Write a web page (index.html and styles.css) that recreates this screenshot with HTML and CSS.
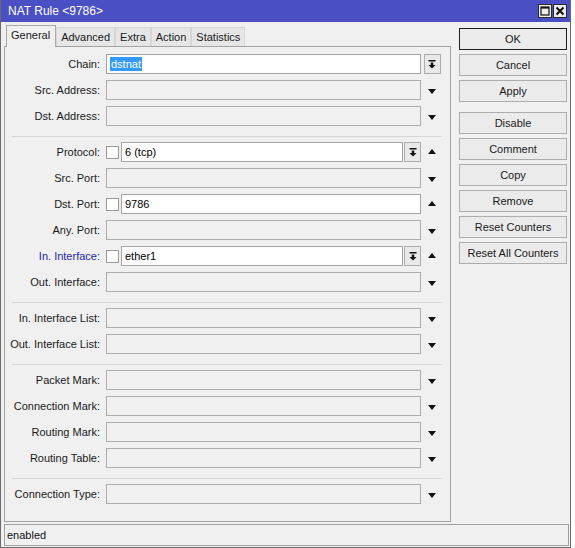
FILE: index.html
```html
<!DOCTYPE html>
<html lang="en">
<head>
  <meta charset="UTF-8" />
  <title>NAT Rule &lt;9786&gt;</title>
  <link rel="stylesheet" href="styles.css">
</head>
<body>
  <div class="window">
    <div class="titlebar">
      <span>NAT Rule &lt;9786&gt;</span>
      <div class="wbtns">
        <div class="wbtn"><svg width="10" height="10" viewBox="0 0 10 10"><rect x="1" y="1" width="8" height="8" fill="none" stroke="#111" stroke-width="1.2"/><rect x="1" y="1" width="8" height="1.6" fill="#111"/></svg></div>
        <div class="wbtn"><svg width="10" height="10" viewBox="0 0 10 10"><path d="M1.5 1.5 L8.5 8.5 M8.5 1.5 L1.5 8.5" stroke="#111" stroke-width="2"/></svg></div>
      </div>
    </div>

    <div class="content">
      <div class="main">
        <div class="tabs">
          <div class="tab active">General</div>
          <div class="tab">Advanced</div>
          <div class="tab">Extra</div>
          <div class="tab">Action</div>
          <div class="tab">Statistics</div>
        </div>

        <div class="panel">
          <div class="row">
            <label>Chain:</label>
            <div class="ctl"><div class="field"><span class="sel">dstnat</span></div></div>
            <div class="trail"><div class="dd"><svg width="8" height="9" viewBox="0 0 8 9"><rect x="0.5" y="0" width="7" height="1.5" fill="#111"/><rect x="2.8" y="2.5" width="2.4" height="2.5" fill="#111"/><path d="M0.5 5 H7.5 L4 8.5 Z" fill="#111"/></svg></div></div>
          </div>
          <div class="row">
            <label>Src. Address:</label>
            <div class="ctl"><div class="field off"></div></div>
            <div class="trail"><span class="down"></span></div>
          </div>
          <div class="row">
            <label>Dst. Address:</label>
            <div class="ctl"><div class="field off"></div></div>
            <div class="trail"><span class="down"></span></div>
          </div>

          <div class="sep"></div>

          <div class="row">
            <label>Protocol:</label>
            <div class="ctl">
              <div class="chk"></div>
              <div class="field">6 (tcp)</div>
              <div class="dd"><svg width="8" height="9" viewBox="0 0 8 9"><rect x="0.5" y="0" width="7" height="1.5" fill="#111"/><rect x="2.8" y="2.5" width="2.4" height="2.5" fill="#111"/><path d="M0.5 5 H7.5 L4 8.5 Z" fill="#111"/></svg></div>
            </div>
            <div class="trail"><span class="up"></span></div>
          </div>
          <div class="row">
            <label>Src. Port:</label>
            <div class="ctl"><div class="field off"></div></div>
            <div class="trail"><span class="down"></span></div>
          </div>
          <div class="row">
            <label>Dst. Port:</label>
            <div class="ctl">
              <div class="chk"></div>
              <div class="field">9786</div>
            </div>
            <div class="trail"><span class="up"></span></div>
          </div>
          <div class="row">
            <label>Any. Port:</label>
            <div class="ctl"><div class="field off"></div></div>
            <div class="trail"><span class="down"></span></div>
          </div>
          <div class="row">
            <label class="blue">In. Interface:</label>
            <div class="ctl">
              <div class="chk"></div>
              <div class="field">ether1</div>
              <div class="dd"><svg width="8" height="9" viewBox="0 0 8 9"><rect x="0.5" y="0" width="7" height="1.5" fill="#111"/><rect x="2.8" y="2.5" width="2.4" height="2.5" fill="#111"/><path d="M0.5 5 H7.5 L4 8.5 Z" fill="#111"/></svg></div>
            </div>
            <div class="trail"><span class="up"></span></div>
          </div>
          <div class="row">
            <label>Out. Interface:</label>
            <div class="ctl"><div class="field off"></div></div>
            <div class="trail"><span class="down"></span></div>
          </div>

          <div class="sep"></div>

          <div class="row">
            <label>In. Interface List:</label>
            <div class="ctl"><div class="field off"></div></div>
            <div class="trail"><span class="down"></span></div>
          </div>
          <div class="row">
            <label>Out. Interface List:</label>
            <div class="ctl"><div class="field off"></div></div>
            <div class="trail"><span class="down"></span></div>
          </div>

          <div class="sep"></div>

          <div class="row">
            <label>Packet Mark:</label>
            <div class="ctl"><div class="field off"></div></div>
            <div class="trail"><span class="down"></span></div>
          </div>
          <div class="row">
            <label>Connection Mark:</label>
            <div class="ctl"><div class="field off"></div></div>
            <div class="trail"><span class="down"></span></div>
          </div>
          <div class="row">
            <label>Routing Mark:</label>
            <div class="ctl"><div class="field off"></div></div>
            <div class="trail"><span class="down"></span></div>
          </div>
          <div class="row">
            <label>Routing Table:</label>
            <div class="ctl"><div class="field off"></div></div>
            <div class="trail"><span class="down"></span></div>
          </div>

          <div class="sep"></div>

          <div class="row">
            <label>Connection Type:</label>
            <div class="ctl"><div class="field off"></div></div>
            <div class="trail"><span class="down"></span></div>
          </div>
        </div>
      </div>

      <div class="side">
        <button class="ok">OK</button>
        <button>Cancel</button>
        <button class="gap-after">Apply</button>
        <button>Disable</button>
        <button>Comment</button>
        <button>Copy</button>
        <button>Remove</button>
        <button>Reset Counters</button>
        <button>Reset All Counters</button>
      </div>
    </div>

    <div class="status">enabled</div>
  </div>
</body>
</html>
```

FILE: styles.css
```css
body {
  margin: 0;
  background: #fff;
  font-family: "Liberation Sans", Arial, sans-serif;
  font-size: 11px;
  color: #1a1a1a;
}

.window {
  width: 569px;
  height: 547px;
  border: 1px solid #6b6b6b;
  border-top: 0;
  background: #f0f0f0;
  display: flex;
  flex-direction: column;
}

.titlebar {
  height: 22px;
  flex-shrink: 0;
  background: #4a4fc4;
  color: #fff;
  font-size: 12px;
  display: flex;
  align-items: center;
  padding: 0 3px 0 7px;
}

.wbtns {
  margin-left: auto;
  display: flex;
  gap: 1px;
}

.wbtn {
  width: 14px;
  height: 14px;
  box-sizing: border-box;
  border: 1px solid #2a2a2a;
  background: #ececec;
  display: flex;
  align-items: center;
  justify-content: center;
}

.content {
  display: flex;
  flex: 1;
}

.main {
  margin-left: 3px;
  width: 447px;
  display: flex;
  flex-direction: column;
}

.tabs {
  height: 24px;
  display: flex;
  align-items: flex-end;
  padding-left: 2px;
  position: relative;
  z-index: 1;
}

.tab {
  height: 19px;
  line-height: 18px;
  padding: 0 4px;
  box-sizing: border-box;
  background: #e6e6e6;
  border: 1px solid #d6d6d6;
  border-bottom: 0;
  color: #1a1a1a;
}

.tab.active {
  height: 22px;
  line-height: 19px;
  margin-bottom: -1px;
  background: #f0f0f0;
  border-color: #a9a9a9;
  padding: 0 5px 0 4px;
}

.panel {
  height: 476px;
  box-sizing: border-box;
  border: 1px solid #a3a3a3;
  padding-top: 7px;
  display: flex;
  flex-direction: column;
}

.row {
  display: flex;
  align-items: center;
  height: 20px;
  margin-bottom: 6px;
  flex-shrink: 0;
}

.row label {
  width: 95px;
  margin-right: 6px;
  text-align: right;
  white-space: nowrap;
}

.row label.blue {
  color: #2626b0;
}

.ctl {
  width: 315px;
  height: 20px;
  display: flex;
  align-items: center;
}

.field {
  flex: 1;
  height: 20px;
  box-sizing: border-box;
  border: 1px solid #a5a5a5;
  background: #fff;
  padding-left: 3px;
  line-height: 18px;
  color: #000;
}

.field.off {
  background: #f0f0f0;
  border-color: #adadad;
}

.sel {
  background: #3399ff;
  color: #fff;
  padding: 1px 1px;
}

.chk {
  width: 13px;
  height: 13px;
  box-sizing: border-box;
  border: 1px solid #9a9a9a;
  background: #fff;
  margin-right: 2px;
}

.dd {
  width: 17px;
  height: 20px;
  box-sizing: border-box;
  border: 1px solid #adadad;
  background: #e9e9e9;
  margin-left: 1px;
  display: flex;
  align-items: center;
  justify-content: center;
}

.trail {
  width: 22px;
  display: flex;
  align-items: center;
  justify-content: center;
}

.trail .dd {
  margin-left: 0;
}

.down, .up {
  width: 0;
  height: 0;
  border-left: 4.5px solid transparent;
  border-right: 4.5px solid transparent;
}

.down {
  border-top: 5px solid #111;
  margin-top: 2px;
}

.up {
  border-bottom: 5px solid #111;
  margin-bottom: 2px;
}

.sep {
  height: 1px;
  flex-shrink: 0;
  background: #d6d6d6;
  margin: 4px 8px 5px 7px;
}

.side {
  margin-left: 8px;
  padding-top: 6px;
  width: 108px;
  display: flex;
  flex-direction: column;
  gap: 4px;
}

.side button {
  height: 22px;
  box-sizing: border-box;
  border: 1px solid #adadad;
  background: #ebebeb;
  font-family: "Liberation Sans", Arial, sans-serif;
  font-size: 11px;
  color: #1a1a1a;
  padding: 0;
}

.side button.ok {
  border-color: #1e1e1e;
}

.side button.gap-after {
  margin-bottom: 6px;
}

.status {
  margin: 2px 1px 1px 3px;
  height: 22px;
  box-sizing: border-box;
  border: 1px solid #a0a0a0;
  padding-left: 2px;
  line-height: 20px;
  color: #111;
  flex-shrink: 0;
}
```
